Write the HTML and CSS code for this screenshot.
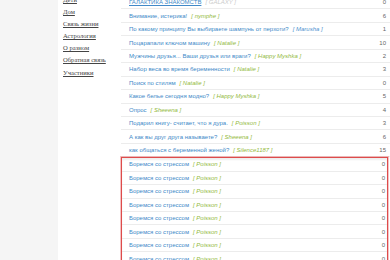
FILE: index.html
```html
<!DOCTYPE html>
<html>
<head>
<meta charset="utf-8">
<link rel="stylesheet" href="styles.css">
</head>
<body>
<div class="page">
  <aside class="side"></aside>
  <nav class="nav">
    <a href="#">Дети</a>
    <a href="#">Дом</a>
    <a href="#">Связь жизни</a>
    <a href="#">Астрология</a>
    <a href="#">О разном</a>
    <a href="#">Обратная связь</a>
    <a href="#">Участники</a>
  </nav>
  <main class="main">
    <div class="row"><span class="title"><a class="t u" href="#">ГАЛАКТИКА ЗНАКОМСТВ</a><span class="au gray">[ GALAXY ]</span></span><span class="n">0</span></div>
    <div class="row"><span class="title"><a class="t" href="#">Внимание, истерика!</a><span class="au">[ nymphe ]</span></span><span class="n">6</span></div>
    <div class="row"><span class="title"><a class="t" href="#">По какому принципу Вы выбираете шампунь от перхоти?</a><span class="au blue">[ Marusha ]</span></span><span class="n">1</span></div>
    <div class="row"><span class="title"><a class="t" href="#">Поцарапали ключом машину</a><span class="au">[ Natalie ]</span></span><span class="n">10</span></div>
    <div class="row"><span class="title"><a class="t" href="#">Мужчины друзья... Ваши друзья или враги?</a><span class="au">[ Happy Myshka ]</span></span><span class="n">2</span></div>
    <div class="row"><span class="title"><a class="t" href="#">Набор веса во время беременности</a><span class="au">[ Natalie ]</span></span><span class="n">3</span></div>
    <div class="row"><span class="title"><a class="t" href="#">Поиск по стилям</a><span class="au">[ Natalie ]</span></span><span class="n">0</span></div>
    <div class="row"><span class="title"><a class="t" href="#">Какое белье сегодня модно?</a><span class="au">[ Happy Myshka ]</span></span><span class="n">5</span></div>
    <div class="row"><span class="title"><a class="t" href="#">Опрос</a><span class="au">[ Sheeena ]</span></span><span class="n">4</span></div>
    <div class="row"><span class="title"><a class="t" href="#">Подарил книгу- считает, что я дура.</a><span class="au">[ Poisson ]</span></span><span class="n">3</span></div>
    <div class="row"><span class="title"><a class="t" href="#">А как вы друг друга называете?</a><span class="au">[ Sheeena ]</span></span><span class="n">6</span></div>
    <div class="row"><span class="title"><a class="t" href="#">как общаться с беременной женой?</a><span class="au">[ Silence1187 ]</span></span><span class="n">15</span></div>
    <div class="box">
      <div class="row"><span class="title"><a class="t" href="#">Боремся со стрессом</a><span class="au">[ Poisson ]</span></span><span class="n">0</span></div>
      <div class="row"><span class="title"><a class="t" href="#">Боремся со стрессом</a><span class="au">[ Poisson ]</span></span><span class="n">0</span></div>
      <div class="row"><span class="title"><a class="t" href="#">Боремся со стрессом</a><span class="au">[ Poisson ]</span></span><span class="n">0</span></div>
      <div class="row"><span class="title"><a class="t" href="#">Боремся со стрессом</a><span class="au">[ Poisson ]</span></span><span class="n">0</span></div>
      <div class="row"><span class="title"><a class="t" href="#">Боремся со стрессом</a><span class="au">[ Poisson ]</span></span><span class="n">0</span></div>
      <div class="row"><span class="title"><a class="t" href="#">Боремся со стрессом</a><span class="au">[ Poisson ]</span></span><span class="n">0</span></div>
      <div class="row"><span class="title"><a class="t" href="#">Боремся со стрессом</a><span class="au">[ Poisson ]</span></span><span class="n">0</span></div>
      <div class="row"><span class="title"><a class="t" href="#">Боремся со стрессом</a><span class="au">[ Poisson ]</span></span><span class="n">0</span></div>
    </div>
  </main>
</div>
</body>
</html>
```
FILE: styles.css
```css
html, body {
  margin: 0;
  padding: 0;
  background: #fff;
  overflow: hidden;
}
.page {
  display: flex;
  width: 390px;
  height: 260px;
  overflow: hidden;
}
.side {
  width: 58px;
  flex: none;
  background: #f5f5f5;
}
.nav {
  width: 63px;
  flex: none;
  display: flex;
  flex-direction: column;
  padding-left: 5px;
  box-sizing: border-box;
  margin-top: -6px;
}
.nav a {
  font-family: "Liberation Serif", serif;
  font-size: 6.6px;
  line-height: 12.1px;
  color: #444;
  text-decoration: underline;
}
.main {
  flex: 1;
  min-width: 0;
  display: flex;
  flex-direction: column;
  margin-top: -4px;
  font-family: "Liberation Sans", Arial, sans-serif;
  font-size: 6px;
}
.row {
  height: 13.45px;
  flex: none;
  box-sizing: border-box;
  display: flex;
  align-items: center;
  justify-content: space-between;
  padding: 0 4px 0 8px;
  border-bottom: 1px solid #ececec;
  white-space: nowrap;
}
.title {
  display: flex;
  align-items: center;
  gap: 4px;
}
.t {
  color: #4189c8;
  text-decoration: none;
}
.t.u {
  text-decoration: underline;
}
.au {
  color: #93ba40;
  font-style: italic;
}
.au.gray {
  color: #cacaca;
}
.au.blue {
  color: #4d92cf;
}
.n {
  color: #666;
}
.box {
  flex: none;
  margin-top: 0;
  margin-right: 2px;
  border: 1px solid #de4b4b;
  box-shadow: 0 0 0 1px rgba(232, 120, 120, 0.45), inset 0 2px 2px rgba(0, 0, 0, 0.07);
}
.box .row {
  padding: 0 2px 0 7px;
}
```
